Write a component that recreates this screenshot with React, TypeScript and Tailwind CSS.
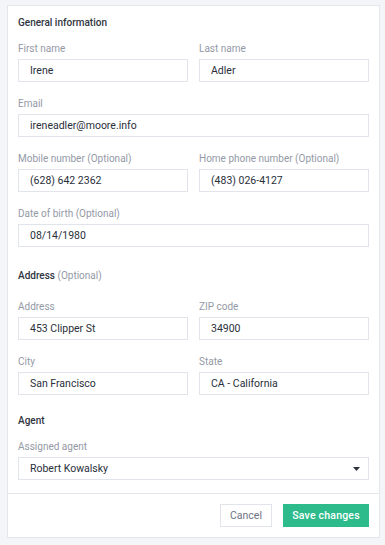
import React from "react";

function Field({ label, value, className = "" }: { label: string; value: string; className?: string }) {
  return (
    <div className={`flex flex-col ${className}`}>
      <label className="text-[10px] leading-[14px] text-[#9499a6] mb-[3px]">{label}</label>
      <div className="h-[23px] border border-[#e1e4ea] bg-white flex items-center pl-[11px] text-[10.5px] text-[#2a2f3a]">
        {value}
      </div>
    </div>
  );
}

export default function App() {
  return (
    <div className="min-h-[545px] bg-[#f4f5f8] pt-[5px] pl-[7px] pr-[5px]" style={{ fontFamily: "Roboto, 'Liberation Sans', sans-serif" }}>
      <div className="w-[373px] h-[533px] bg-white border border-[#e4e6ec] flex flex-col">
        <div className="px-[10px] pt-[10px] flex flex-col">
          <div className="text-[10px] leading-[14px] font-medium text-[#2f3440] mb-[12px]">General information</div>
          <div className="grid grid-cols-2 gap-x-[11px]">
            <Field label="First name" value="Irene" />
            <Field label="Last name" value="Adler" />
          </div>
          <Field className="mt-[15px]" label="Email" value="ireneadler@moore.info" />
          <div className="grid grid-cols-2 gap-x-[11px] mt-[15px]">
            <Field label="Mobile number (Optional)" value="(628) 642 2362" />
            <Field label="Home phone number (Optional)" value="(483) 026-4127" />
          </div>
          <Field className="mt-[15px]" label="Date of birth (Optional)" value="08/14/1980" />
          <div className="text-[10px] leading-[14px] mt-[22px] mb-[17px]">
            <span className="font-medium text-[#2f3440]">Address</span>{" "}
            <span className="text-[#9499a6]">(Optional)</span>
          </div>
          <div className="grid grid-cols-2 gap-x-[11px]">
            <Field label="Address" value="453 Clipper St" />
            <Field label="ZIP code" value="34900" />
          </div>
          <div className="grid grid-cols-2 gap-x-[11px] mt-[15px]">
            <Field label="City" value="San Francisco" />
            <Field label="State" value="CA - California" />
          </div>
          <div className="text-[10px] leading-[14px] font-medium text-[#2f3440] mt-[19px] mb-[12px]">Agent</div>
          <div className="flex flex-col">
            <label className="text-[10px] leading-[14px] text-[#9499a6] mb-[3px]">Assigned agent</label>
            <div className="h-[23px] border border-[#e1e4ea] bg-white flex items-center justify-between pl-[11px] pr-[8px] text-[10.5px] text-[#2a2f3a]">
              <span>Robert Kowalsky</span>
              <svg width="7" height="4" viewBox="0 0 7 4"><path d="M0 0h7L3.5 4z" fill="#2f3440" /></svg>
            </div>
          </div>
        </div>
        <div className="mt-[13px] border-t border-[#e4e6ec] flex justify-end gap-[11px] px-[10px] pt-[10px]">
          <button className="h-[23px] w-[52px] border border-[#e1e4ea] bg-white text-[10.5px] text-[#6e7382]">Cancel</button>
          <button className="h-[23px] w-[86px] bg-[#2dbb8b] text-[10.5px] font-medium text-white tracking-[0.2px]">Save changes</button>
        </div>
      </div>
    </div>
  );
}
